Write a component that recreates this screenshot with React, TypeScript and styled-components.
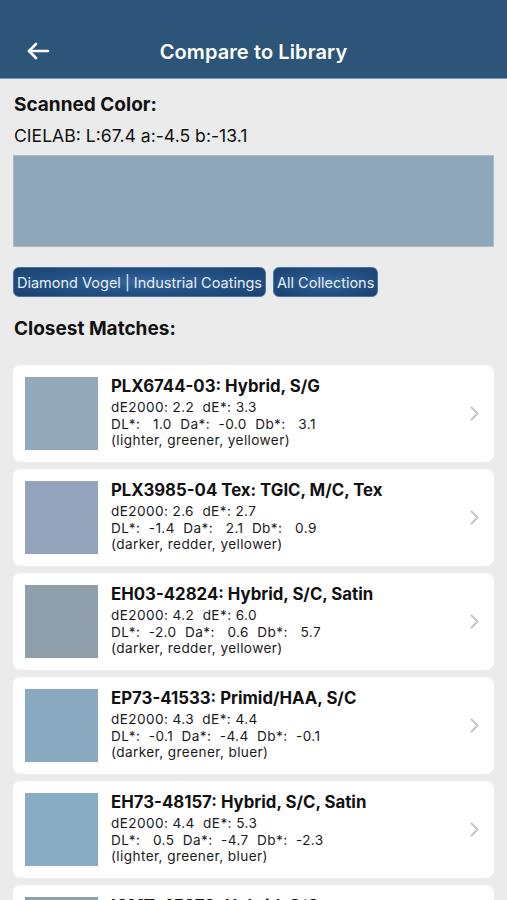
import React from "react";
import styled, { createGlobalStyle } from "styled-components";

const Global = createGlobalStyle`
  html, body { margin: 0; padding: 0; background: #ebebeb; }
  body { font-family: Inter, "Liberation Sans", Arial, sans-serif; color: #111; }
  * { box-sizing: border-box; }
`;

const Page = styled.div`
  width: 507px;
  height: 900px;
  overflow: hidden;
  background: #ebebeb;
  display: flex;
  flex-direction: column;
`;

const Header = styled.header`
  height: 79px;
  background: #2d5479;
  border-bottom: 1px solid #7f98b3;
  display: flex;
  align-items: flex-end;
  justify-content: center;
  position: relative;
  padding-bottom: 14px;
  flex-shrink: 0;
`;

const BackButton = styled.button`
  position: absolute;
  left: 26px;
  bottom: 17px;
  background: none;
  border: none;
  padding: 0;
  display: flex;
  color: #fff;
`;

const Title = styled.h1`
  margin: 0;
  font-size: 20px;
  font-weight: 600;
  color: #fff;
  letter-spacing: 0.1px;
`;

const Content = styled.main`
  padding: 14px 13px 0 13px;
  display: flex;
  flex-direction: column;
`;

const SectionTitle = styled.h2`
  margin: 0 0 0 1px;
  font-size: 19px;
  font-weight: 700;
  line-height: 24px;
`;

const LabText = styled.div`
  margin: 8px 0 0 1px;
  font-size: 17.6px;
  line-height: 22px;
`;

const BigSwatch = styled.div<{ $c: string }>`
  margin-top: 8px;
  height: 92px;
  width: 481px;
  background: ${(p) => p.$c};
  border: 1px solid #a9bccc;
`;

const Chips = styled.div`
  display: flex;
  gap: 7px;
  margin-top: 20px;
`;

const Chip = styled.div`
  height: 30px;
  padding: 0 3px;
  border-radius: 6px;
  border: 1px solid #4a74a4;
  background: radial-gradient(ellipse at center, #33659c 0%, #224f83 55%, #1b416f 100%);
  color: #e8eef6;
  font-size: 14.5px;
  display: flex;
  align-items: center;
`;

const MatchesTitle = styled(SectionTitle)`
  margin-top: 20px;
`;

const List = styled.div`
  margin-top: 24px;
  display: flex;
  flex-direction: column;
  gap: 7px;
`;

const Card = styled.div`
  height: 97px;
  width: 481px;
  background: #fff;
  border-radius: 8px;
  display: flex;
  align-items: flex-start;
  padding: 12px 12px 0 12px;
  flex-shrink: 0;
`;

const Swatch = styled.div<{ $c: string }>`
  width: 73px;
  height: 73px;
  background: ${(p) => p.$c};
  flex-shrink: 0;
`;

const Info = styled.div`
  margin-left: 13px;
  margin-top: -1px;
  flex: 1;
  display: flex;
  flex-direction: column;
`;

const Name = styled.div`
  font-size: 16.8px;
  font-weight: 700;
  line-height: 21px;
  margin-bottom: 2px;
  color: #111;
`;

const Line = styled.div`
  font-size: 13.6px;
  letter-spacing: 0.4px;
  line-height: 16.5px;
  color: #1a1a1a;
  white-space: pre;
`;

const Chevron = styled.div`
  display: flex;
  align-self: center;
  margin: -12px 3px 0 0;
`;

type Match = {
  name: string;
  color: string;
  de: string;
  dl: string;
  desc: string;
};

const matches: Match[] = [
  { name: "PLX6744-03: Hybrid, S/G", color: "#93a8b9", de: "dE2000: 2.2  dE*: 3.3", dl: "DL*:   1.0  Da*:  -0.0  Db*:   3.1", desc: "(lighter, greener, yellower)" },
  { name: "PLX3985-04 Tex: TGIC, M/C, Tex", color: "#93a3bb", de: "dE2000: 2.6  dE*: 2.7", dl: "DL*:  -1.4  Da*:   2.1  Db*:   0.9", desc: "(darker, redder, yellower)" },
  { name: "EH03-42824: Hybrid, S/C, Satin", color: "#909fac", de: "dE2000: 4.2  dE*: 6.0", dl: "DL*:  -2.0  Da*:   0.6  Db*:   5.7", desc: "(darker, redder, yellower)" },
  { name: "EP73-41533: Primid/HAA, S/C", color: "#88a9c0", de: "dE2000: 4.3  dE*: 4.4", dl: "DL*:  -0.1  Da*:  -4.4  Db*:  -0.1", desc: "(darker, greener, bluer)" },
  { name: "EH73-48157: Hybrid, S/C, Satin", color: "#86abc2", de: "dE2000: 4.4  dE*: 5.3", dl: "DL*:   0.5  Da*:  -4.7  Db*:  -2.3", desc: "(lighter, greener, bluer)" },
  { name: "ICMT-45373: Hybrid, S/C", color: "#8f9faa", de: "dE2000: 4.6  dE*: 5.5", dl: "DL*:  -1.2  Da*:  -1.1  Db*:   5.2", desc: "(darker, greener, yellower)" },
];

const ArrowLeft = () => (
  <svg width="24" height="20" viewBox="0 0 24 20" fill="none" stroke="#fff" strokeWidth="2.6" strokeLinecap="round" strokeLinejoin="round">
    <path d="M22 10H3" />
    <path d="M10 3L3 10l7 7" />
  </svg>
);

const ChevronRight = () => (
  <svg width="9" height="15" viewBox="0 0 9 15" fill="none" stroke="#c5c5c8" strokeWidth="1.8" strokeLinecap="round" strokeLinejoin="round">
    <path d="M1.5 1.5l6 6-6 6" />
  </svg>
);

export default function App() {
  return (
    <Page>
      <Global />
      <Header>
        <BackButton aria-label="Back">
          <ArrowLeft />
        </BackButton>
        <Title>Compare to Library</Title>
      </Header>
      <Content>
        <SectionTitle>Scanned Color:</SectionTitle>
        <LabText>CIELAB: L:67.4 a:-4.5 b:-13.1</LabText>
        <BigSwatch $c="#8fa7bb" />
        <Chips>
          <Chip>Diamond Vogel | Industrial Coatings</Chip>
          <Chip>All Collections</Chip>
        </Chips>
        <MatchesTitle>Closest Matches:</MatchesTitle>
        <List>
          {matches.map((m) => (
            <Card key={m.name}>
              <Swatch $c={m.color} />
              <Info>
                <Name>{m.name}</Name>
                <Line>{m.de}</Line>
                <Line>{m.dl}</Line>
                <Line>{m.desc}</Line>
              </Info>
              <Chevron>
                <ChevronRight />
              </Chevron>
            </Card>
          ))}
        </List>
      </Content>
    </Page>
  );
}
